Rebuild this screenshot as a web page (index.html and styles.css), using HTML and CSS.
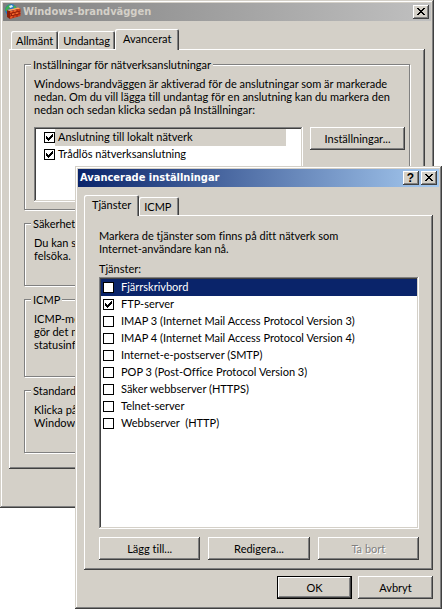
FILE: index.html
```html
<!DOCTYPE html>
<html lang="sv">
<head>
<meta charset="utf-8">
<title>Windows-brandväggen</title>
<link rel="stylesheet" href="styles.css">
</head>
<body>
<main class="desktop">
  <section class="window window-back" aria-label="Windows-brandväggen">
    <header class="titlebar titlebar-inactive">
      <svg class="app-icon" viewBox="0 0 16 16" aria-hidden="true">
        <circle cx="6" cy="6" r="6" fill="#1f6fd0"/>
        <path d="M1 3 L4 0.500 L7 1 L6 4 L3 5 L2 8 L0 6Z" fill="#3fae4c"/>
        <path d="M4 2 L7 1 L8 3 L5 4Z" fill="#d8ecff"/>
        <path d="M9 1 L11.500 3.500 L10 5 L8 3Z" fill="#43b04a"/>
        <path d="M2 6 L5 7 L5 15 L2 13Z" fill="#8c1f08"/>
        <path d="M2 6 L13 3.500 L15.500 4.500 L5 7Z" fill="#ffa85a"/>
        <path d="M5 7 L15.500 4.500 L15.500 12 L5 15Z" fill="#d8401a"/>
        <path d="M5 9.500 L15.500 7 M5 12.200 L15.500 9.700 M8 6.500 V9 M12 5.500 V8 M6.500 9.500 V12 M10 8.500 V11 M14 7.500 V10 M8 11.500 V14 M12 10.500 V13" stroke="#8a1a06" stroke-width="0.800" fill="none"/>
        <path d="M5.500 8 L7.500 7.500 M8.700 7.200 L11.300 6.600 M7 10.500 L9.500 9.800 M10.700 9.500 L13.300 8.900 M5.500 13.200 L7.500 12.700" stroke="#ff8a3c" stroke-width="0.800" fill="none"/>
      </svg>
      <h1 class="title">Windows-brandväggen</h1>
      <div class="caption-buttons">
        <button class="caption-button" aria-label="Stäng"><svg viewBox="0 0 8 7" class="glyph-close"><path d="M0 0h2v1h1v1h2v-1h1v-1h2v1h-1v1h-1v1h-1v1h1v1h1v1h1v1h-2v-1h-1v-1h-2v1h-1v1h-2v-1h1v-1h1v-1h1v-1h-1v-1h-1v-1h-1z"/></svg></button>
      </div>
    </header>
    <div class="back-body">
      <div class="tabs" role="tablist">
        <button class="tab" role="tab">Allmänt</button>
        <button class="tab" role="tab">Undantag</button>
        <button class="tab tab-active" role="tab" aria-selected="true">Avancerat</button>
      </div>
      <div class="panel back-panel" role="tabpanel">
        <fieldset class="group">
          <legend>Inställningar för nätverksanslutningar</legend>
          <p>Windows-brandväggen är aktiverad för de anslutningar som är markerade<br>nedan. Om du vill lägga till undantag för en anslutning kan du markera den<br>nedan och sedan klicka sedan på Inställningar:</p>
          <div class="connections">
            <ul class="listbox connection-list">
              <li><label class="row row-current"><input type="checkbox" checked><span>Anslutning till lokalt nätverk</span></label></li>
              <li><label class="row"><input type="checkbox" checked><span>Trådlös nätverksanslutning</span></label></li>
            </ul>
            <button class="button">Inställningar...</button>
          </div>
        </fieldset>
        <fieldset class="group group-small">
          <legend>Säkerhet</legend>
          <p>Du kan se<br>felsöka.</p>
        </fieldset>
        <fieldset class="group group-icmp">
          <legend>ICMP</legend>
          <p>ICMP-med<br>gör det mer<br>statusinfo</p>
        </fieldset>
        <fieldset class="group group-small">
          <legend>Standard</legend>
          <p>Klicka på<br>Windows</p>
        </fieldset>
      </div>
    </div>
  </section>

  <section class="window window-front" aria-label="Avancerade inställningar">
    <header class="titlebar titlebar-active">
      <h2 class="title">Avancerade inställningar</h2>
      <div class="caption-buttons">
        <button class="caption-button caption-help" aria-label="Hjälp">?</button>
        <button class="caption-button" aria-label="Stäng"><svg viewBox="0 0 8 7" class="glyph-close"><path d="M0 0h2v1h1v1h2v-1h1v-1h2v1h-1v1h-1v1h-1v1h1v1h1v1h1v1h-2v-1h-1v-1h-2v1h-1v1h-2v-1h1v-1h1v-1h1v-1h-1v-1h-1v-1h-1z"/></svg></button>
      </div>
    </header>
    <div class="front-body">
      <div class="tabs tabs-front" role="tablist">
        <button class="tab tab-active" role="tab" aria-selected="true">Tjänster</button>
        <button class="tab" role="tab">ICMP</button>
      </div>
      <div class="panel front-panel" role="tabpanel">
        <p>Markera de tjänster som finns på ditt nätverk som<br>Internet-användare kan nå.</p>
        <p class="list-label" id="services">Tjänster:</p>
        <ul class="listbox service-list" aria-labelledby="services">
          <li><label class="row row-selected"><input type="checkbox"><span>Fjärrskrivbord</span></label></li>
          <li><label class="row"><input type="checkbox" checked><span>FTP-server</span></label></li>
          <li><label class="row"><input type="checkbox"><span>IMAP 3 (Internet Mail Access Protocol Version 3)</span></label></li>
          <li><label class="row"><input type="checkbox"><span>IMAP 4 (Internet Mail Access Protocol Version 4)</span></label></li>
          <li><label class="row"><input type="checkbox"><span>Internet-e-postserver (SMTP)</span></label></li>
          <li><label class="row"><input type="checkbox"><span>POP 3 (Post-Office Protocol Version 3)</span></label></li>
          <li><label class="row"><input type="checkbox"><span>Säker webbserver (HTTPS)</span></label></li>
          <li><label class="row"><input type="checkbox"><span>Telnet-server</span></label></li>
          <li><label class="row"><input type="checkbox"><span>Webbserver&nbsp; (HTTP)</span></label></li>
        </ul>
        <div class="list-actions">
          <button class="button">Lägg till...</button>
          <button class="button">Redigera...</button>
          <button class="button" disabled>Ta bort</button>
        </div>
      </div>
      <footer class="dialog-actions">
        <button class="button button-default">OK</button>
        <button class="button">Avbryt</button>
      </footer>
    </div>
  </section>
</main>
</body>
</html>
```
FILE: styles.css
```css
:root {
  --face: #d4d0c8;
  --shadow: #808080;
  --dark: #404040;
  --light: #ffffff;
  --select: #0a246a;
}

* { box-sizing: border-box; }

body {
  margin: 0;
  background: #ffffff;
  color: #000000;
  font: 11px/13px Lato, "Liberation Sans", Arial, sans-serif;
  font-variant-ligatures: none;
}

button, input { font: inherit; color: inherit; margin: 0; }
p, ul, h1, h2 { margin: 0; padding: 0; }
ul { list-style: none; }

.desktop { position: relative; min-height: 100vh; }

.window {
  position: absolute;
  padding: 3px;
  background: var(--face);
  box-shadow: inset -1px -1px var(--dark), inset 1px 1px var(--face),
    inset -2px -2px var(--shadow), inset 2px 2px var(--light);
}
.window-back { top: 0; left: 0; right: 8px; }
.window-front { top: 166px; left: 75px; right: 0; }

.titlebar {
  display: flex;
  align-items: center;
  height: 18px;
  padding: 0 2px;
}
.titlebar-inactive { background: linear-gradient(90deg, #808080, #c0c0c0); color: var(--face); }
.titlebar-active { background: linear-gradient(90deg, #0a246a, #a6caf0); color: #ffffff; }
.app-icon { width: 16px; height: 16px; margin-right: 2px; }
.title {
  flex: 1;
  font: bold 11px/18px "DejaVu Sans Condensed", "Noto Sans", sans-serif;
  white-space: nowrap;
}

.caption-buttons { display: flex; gap: 2px; }
.caption-button {
  display: flex;
  align-items: center;
  justify-content: center;
  width: 16px;
  height: 14px;
  padding: 0 1px 1px 0;
  border: 0;
  background: var(--face);
  color: #000000;
}
.caption-help { font: bold 12px/12px "Liberation Sans", Arial, sans-serif; }
.glyph-close { width: 8px; height: 7px; shape-rendering: crispEdges; }

.caption-button, .button {
  box-shadow: inset -1px -1px var(--dark), inset 1px 1px var(--light),
    inset -2px -2px var(--shadow);
}

.back-body { padding: 8px 6px 36px; }
.front-body { padding: 8px 6px 7px; }

.tabs { display: flex; align-items: flex-end; height: 20px; padding-left: 2px; }
.tabs-front { padding-left: 0; }
.tab {
  height: 18px;
  padding: 0 5px;
  border: 0;
  border-radius: 2px 2px 0 0;
  background: var(--face);
  box-shadow: inset 1px 1px var(--light), inset -1px 0 var(--dark), inset -2px 0 var(--shadow);
}
.tab-active {
  position: relative;
  height: 21px;
  margin-bottom: -1px;
  padding: 0 8px 2px;
}
.tabs-front .tab:last-child { padding: 0 8px 0 5px; }

.panel {
  background: var(--face);
  box-shadow: inset -1px -1px var(--dark), inset 1px 1px var(--light),
    inset -2px -2px var(--shadow);
}
.back-panel { padding: 9px 15px 16px; }
.front-panel { padding: 14px 14px 10px 15px; }

.group {
  min-width: 0;
  margin: 0 0 7px;
  padding: 6px 4px 7px 9px;
  border: 1px solid var(--shadow);
  box-shadow: 1px 1px var(--light), inset 1px 1px var(--light);
}
.group:last-child { margin-bottom: 0; }
.group legend { margin-left: -3px; padding: 0 2px; background: var(--face); }
.group p { white-space: nowrap; }
.group-small { height: 69px; }
.group-small legend { padding-right: 8px; }
.group-icmp { height: 84px; }

.connections { display: flex; align-items: flex-start; gap: 7px; margin-top: 11px; }

.listbox {
  padding: 2px;
  background: #ffffff;
  box-shadow: inset -1px -1px var(--light), inset 1px 1px var(--shadow),
    inset -2px -2px var(--face), inset 2px 2px var(--dark);
}
.connection-list { flex: 1; height: 75px; padding: 2px 17px 2px 10px; }
.service-list { height: 252px; }

.row { display: flex; align-items: center; height: 17px; }
.row input {
  flex: none;
  display: grid;
  place-items: center;
  width: 11px;
  height: 11px;
  appearance: none;
  border: 1px solid #000000;
  background: #ffffff;
}
.row input:checked::before {
  content: "";
  width: 7px;
  height: 7px;
  background: #000000;
  clip-path: polygon(0 2px, 1px 2px, 1px 3px, 2px 3px, 2px 4px, 3px 4px, 3px 3px, 4px 3px, 4px 2px, 5px 2px, 5px 1px, 6px 1px, 6px 0, 7px 0, 7px 3px, 6px 3px, 6px 4px, 5px 4px, 5px 5px, 4px 5px, 4px 6px, 3px 6px, 3px 7px, 2px 7px, 2px 6px, 1px 6px, 1px 5px, 0 5px);
}
.row span { flex: 1; height: 17px; padding-left: 3px; line-height: 16px; white-space: nowrap; }
.row-current span { background: var(--face); }
.service-list .row { padding-left: 2px; }
.service-list .row span { padding-left: 7px; }
.row-selected { background: var(--select); color: #ffffff; }

.button {
  min-width: 75px;
  height: 23px;
  padding: 0 2px;
  border: 0;
  background: var(--face);
}
.button:disabled { color: var(--shadow); text-shadow: 1px 1px var(--light); }
.button-default { border: 1px solid #000000; }
.connections .button { flex: 0 0 95px; }

.list-label { margin-top: 7px; margin-bottom: 2px; }
.list-actions { display: flex; gap: 8px; margin-top: 8px; }
.list-actions .button { flex: 1; }
.dialog-actions { display: flex; justify-content: flex-end; gap: 6px; margin-top: 6px; }
```
